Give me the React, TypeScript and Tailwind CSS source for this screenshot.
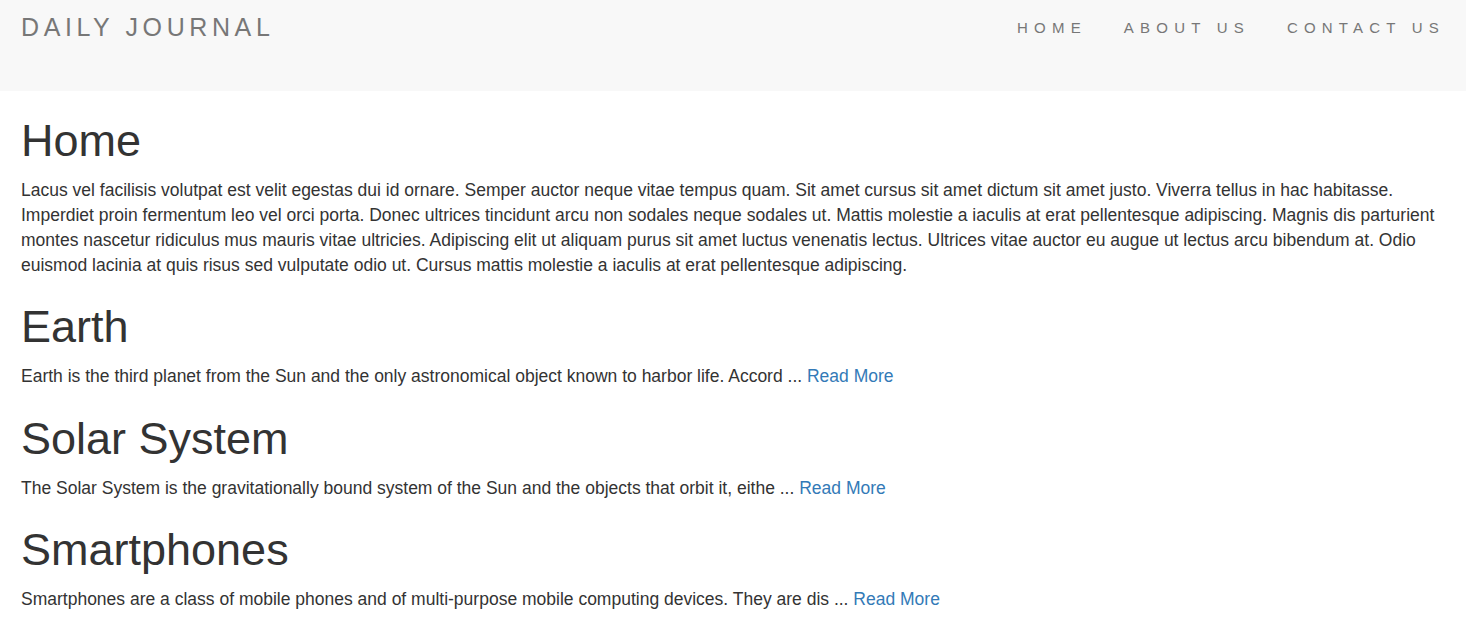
export default function App() {
  const posts = [
    {
      title: "Earth",
      text: "Earth is the third planet from the Sun and the only astronomical object known to harbor life. Accord ... ",
    },
    {
      title: "Solar System",
      text: "The Solar System is the gravitationally bound system of the Sun and the objects that orbit it, eithe ... ",
    },
    {
      title: "Smartphones",
      text: "Smartphones are a class of mobile phones and of multi-purpose mobile computing devices. They are dis ... ",
    },
  ];
  return (
    <div className="min-h-[641px] bg-white text-[#333] font-['Liberation_Sans',Arial,sans-serif] text-[17.5px] leading-[25px]">
      <nav className="h-[91px] bg-[#f8f8f8] flex items-start justify-between pl-[21px] pr-[21px]">
        <a className="text-[25px] leading-[25px] pt-[15px] tracking-[4.6px] text-[#777]">DAILY JOURNAL</a>
        <ul className="flex gap-[37px] pt-[15px]">
          <li><a className="text-[15px] leading-[15px] tracking-[6.2px] text-[#777]">HOME</a></li>
          <li><a className="text-[15px] leading-[15px] tracking-[6.2px] text-[#777]">ABOUT US</a></li>
          <li><a className="text-[15px] leading-[15px] tracking-[6.2px] text-[#777]">CONTACT US</a></li>
        </ul>
      </nav>
      <div className="px-[21px] pt-[24.5px]">
        <h1 className="text-[45px] leading-[49.5px] font-normal mb-[12.5px]">Home</h1>
        <p className="mb-[12.5px]">
          Lacus vel facilisis volutpat est velit egestas dui id ornare. Semper auctor neque vitae tempus quam. Sit amet cursus sit amet dictum sit amet justo. Viverra tellus in hac habitasse. Imperdiet proin fermentum leo vel orci porta. Donec ultrices tincidunt arcu non sodales neque sodales ut. Mattis molestie a iaculis at erat pellentesque adipiscing. Magnis dis parturient montes nascetur ridiculus mus mauris vitae ultricies. Adipiscing elit ut aliquam purus sit amet luctus venenatis lectus. Ultrices vitae auctor eu augue ut lectus arcu bibendum at. Odio euismod lacinia at quis risus sed vulputate odio ut. Cursus mattis molestie a iaculis at erat pellentesque adipiscing.
        </p>
        {posts.map((p) => (
          <div key={p.title}>
            <h1 className="text-[45px] leading-[49.5px] font-normal mt-[24.5px] mb-[12.5px]">{p.title}</h1>
            <p className="mb-[12.5px]">
              {p.text}
              <a className="text-[#337ab7]">Read More</a>
            </p>
          </div>
        ))}
      </div>
    </div>
  );
}
